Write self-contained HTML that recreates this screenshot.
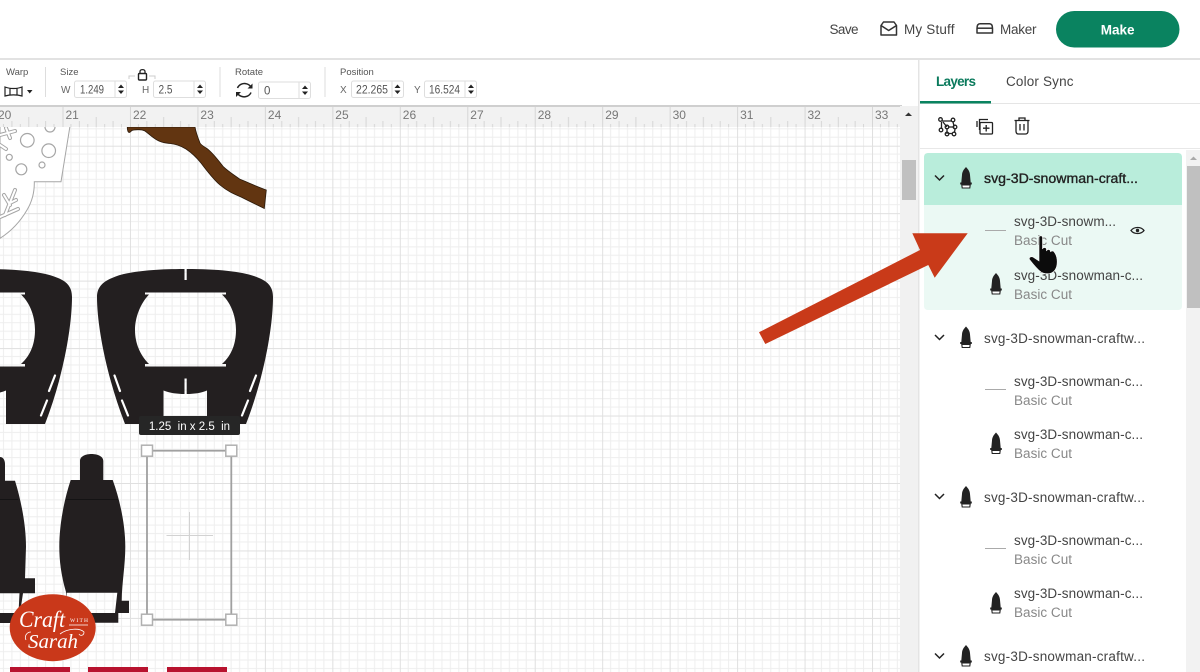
<!DOCTYPE html>
<html>
<head>
<meta charset="utf-8">
<style>
html,body{margin:0;padding:0;background:#fff;width:1200px;height:672px;overflow:hidden}
svg{display:block;font-family:"Liberation Sans",sans-serif}
</style>
</head>
<body>
<svg width="1200" height="672" viewBox="0 0 1200 672" xmlns="http://www.w3.org/2000/svg">
<defs>
<pattern id="grid" patternUnits="userSpaceOnUse" x="62.5" y="145.7" width="67.46" height="67.46">
<path d="M8.43 0V67.46M16.86 0V67.46M25.3 0V67.46M33.73 0V67.46M42.16 0V67.46M50.6 0V67.46M59 0V67.46M0 8.43H67.46M0 16.86H67.46M0 25.3H67.46M0 33.73H67.46M0 42.16H67.46M0 50.6H67.46M0 59H67.46" stroke="#eeeeee" stroke-width="1" fill="none"/>
<path d="M.5 0V67.46M0 .5H67.46" stroke="#e0e0e0" stroke-width="1" fill="none"/>
</pattern>
<pattern id="ticks" patternUnits="userSpaceOnUse" x="62.5" y="106" width="67.46" height="21">
<path d="M.5 0V21" stroke="#d6d6d6"/>
<path d="M8.43 18V21M16.86 15V21M25.3 18V21M33.73 11V21M42.16 18V21M50.6 15V21M59 18V21" stroke="#d6d6d6"/>
</pattern>
<g id="bell">
<path d="M6 0C3.2 3 2.2 5 2 8L1.300 15.5H.2V17.5H11.800V15.5H10.700L10 8C9.800 5 8.800 3 6 0Z" fill="#222"/>
<path d="M1.800 18H10.200L9.800 21H2.200Z" fill="#fff" stroke="#222" stroke-width="1.100"/>
</g>
<path id="arch" fill-rule="evenodd" fill="#231f20" d="M184.500 269C150 269 125 272 112 278C102 282 97 288 97 297C97 325 106 375 125 424H163.500V390.500C170 393 177 394 184.500 394V378.500H186.700V394C194 394 201 393 207 390.500V424H246C265 375 273 325 273 297C273 288 269 282 259 278C246 272 221 269 186.700 269V280H184.500ZM145 292.500H226V294.500H222C232 304 236 318 236 330C236 343 232 355 222 364H226V366.500H145V364H149C140 355 135 343 135 330C135 318 140 304 149 294.500H145Z"/>
</defs>

<!-- canvas -->
<rect x="0" y="106" width="902" height="566" fill="#fff"/>
<rect x="0" y="127" width="900" height="545" fill="url(#grid)"/>

<!-- snowflake piece -->
<path d="M70 126L61 181.700H34.300C34.500 190 33 200 27 210C20 222 10 232 0 238.300V126Z" fill="#fff" stroke="#a6a6a6" stroke-width="1"/>
<g fill="#fff" stroke="#a6a6a6" stroke-width="1.200">
<circle cx="27.300" cy="140.300" r="6.800"/><circle cx="48.700" cy="150.700" r="6.800"/><circle cx="9.300" cy="157.300" r="3"/><circle cx="21.300" cy="169.300" r="5.500"/><circle cx="42" cy="165" r="3"/><circle cx="50" cy="127" r="5"/>
</g>
<g fill="none" stroke="#a6a6a6" stroke-width="4" stroke-linecap="round"><path d="M0 135L15 131M6 128L10 138M0 145L6 149"/><path d="M0 217L18 209M15 190L5 215M4 195L10 205M16 200L10 203"/></g>
<g fill="none" stroke="#fff" stroke-width="2" stroke-linecap="round"><path d="M0 135L15 131M6 128L10 138M0 145L6 149"/><path d="M0 217L18 209M15 190L5 215M4 195L10 205M16 200L10 203"/></g>

<!-- branch -->
<path d="M127.300 127C127.300 130 128 132.500 129.500 132.500C131 132 131 130 134 130C138 129.500 142 129.500 145 131C149 134 153 138 157 140C162 143 166 143 170 143.500C176 144 181 146 186 149C192 153 197 158 201 163C207 171 213 179 220 185C227 191 234 194 241 197C249 201 257 205 264.300 208.500L266.300 190C258 187 249 183 240 179.300C234 175 229 172 223.300 166.700C218 160 213 153 206.700 148.300C203 146 201 145 200 143C198 138 196 133 195 127Z" fill="#623511" stroke="#2b1a0b" stroke-width=".8"/>

<!-- arch shapes -->
<use href="#arch"/>
<use href="#arch" x="-201"/>
<g stroke="#fff" stroke-width="2.200" stroke-linecap="round">
<path d="M114.500 375.500L120 391M122 400.500L128 415.500M256 375.500L250 391M248 400.500L242 415.500"/>
<path d="M55 375.500L49 391M47 400.500L41 415.500"/>
</g>
<rect x="139" y="416" width="101" height="19" rx="2" fill="#262626"/>
<text x="189.500" y="430" font-size="11.500" fill="#fff" text-anchor="middle" xml:space="preserve">1.25  in x 2.5  in</text>

<!-- bottles -->
<path fill-rule="evenodd" fill="#231f20" d="M80 480V461C80 456 86 454 91.500 454C97 454 103.300 456 103.300 461V480H112.700C120 500 125.300 525 125.300 546.700C125.300 565 122 582 121.700 600.700H129V613H118.300V622.700H71L71 613C68 606 66 600 66 592C61 575 59.300 560 59.300 546.700C59.300 525 64 500 70.700 480ZM66.700 592.700L65.500 613H115L117.300 592.700Z"/>
<path fill="#231f20" d="M0 457C3 457 5 460 5 464V480.700H15C21 500 26 525 26 546.700L25 578.300H35V593.300H23L20 613H17V623H0V613H18.500L19.500 593.300H0Z"/>
<path d="M66 499.500H118M0 499.500H18" stroke="#111" stroke-width=".8"/>

<!-- selection -->
<rect x="147" y="450.700" width="84.300" height="169" fill="none" stroke="#a0a0a0" stroke-width="1.800"/>
<g fill="#fff" stroke="#b0b0b0" stroke-width="1.500">
<rect x="141.500" y="445.200" width="11" height="11"/><rect x="225.800" y="445.200" width="11" height="11"/><rect x="141.500" y="614.200" width="11" height="11"/><rect x="225.800" y="614.200" width="11" height="11"/>
</g>
<path d="M166.500 535.500H213M189.500 512V560" stroke="#d2d2d2" stroke-width="1" fill="none"/>

<!-- red bars -->
<rect x="10" y="667" width="60" height="5" fill="#b8132f"/>
<rect x="88" y="667" width="60" height="5" fill="#b8132f"/>
<rect x="167" y="667" width="60" height="5" fill="#b8132f"/>

<!-- logo -->
<ellipse cx="52.700" cy="627.700" rx="43" ry="33.500" fill="#c9381a"/>
<g fill="#fff" font-family="'Liberation Serif',serif" font-style="italic">
<text x="19" y="627" font-size="23" textLength="46" lengthAdjust="spacingAndGlyphs">Craft</text>
<text x="70" y="622" font-size="5.500" font-style="normal" textLength="18">WITH</text>
<text x="28" y="648" font-size="20" textLength="50" lengthAdjust="spacingAndGlyphs">Sarah</text>
</g>
<path d="M69 625H88M60 634C68 628 80 628 84 632C84 636 80 636 79 634M26 640C24 636 27 632 31 632" fill="none" stroke="#fff" stroke-width=".8"/>

<!-- ruler -->
<rect x="0" y="106" width="902" height="21" fill="#f2f2f2"/>
<rect x="0" y="106" width="900" height="21" fill="url(#ticks)"/>
<rect x="0" y="105" width="902" height="2" fill="#cfcfcf"/>
<g font-size="12" fill="#777">
<text x="-2" y="119">20</text><text x="65.500" y="119">21</text><text x="133" y="119">22</text><text x="200.400" y="119">23</text><text x="267.900" y="119">24</text><text x="335.300" y="119">25</text><text x="402.800" y="119">26</text><text x="470.300" y="119">27</text><text x="537.700" y="119">28</text><text x="605.200" y="119">29</text><text x="672.600" y="119">30</text><text x="740.100" y="119">31</text><text x="807.500" y="119">32</text><text x="875" y="119">33</text>
</g>

<!-- canvas scrollbar -->
<rect x="900" y="106" width="18" height="566" fill="#f1f1f1"/>
<rect x="902" y="160" width="14" height="40" fill="#c0c0c0"/>
<path d="M905 116L908.500 112.500L912 116Z" fill="#333"/>

<!-- top bar -->
<rect x="0" y="0" width="1200" height="58" fill="#fff"/>
<rect x="0" y="58" width="1200" height="2" fill="#e2e2e2"/>
<g font-size="13.500" fill="#444">
<text x="829.500" y="34" textLength="29">Save</text>
<text x="904" y="34" textLength="50.500">My Stuff</text>
<text x="1000" y="34" textLength="36.500">Maker</text>
</g>
<g fill="none" stroke="#333" stroke-width="1.500" stroke-linejoin="round">
<path d="M881 25.500L883.500 22H894L896.500 25.500V35H881Z"/><path d="M881 25.500L888.700 30.500L896.500 25.500"/>
<path d="M977 28.500C977 25 978 23.800 980 23.800H989.500C991.500 23.800 992.500 25 992.500 28.500V33H977Z"/><path d="M977 28.200H992.500"/>
</g>
<rect x="1056" y="11" width="123.500" height="36.500" rx="18.200" fill="#0a8360"/>
<text x="1117.700" y="34.500" font-size="13.500" font-weight="bold" fill="#fff" text-anchor="middle">Make</text>

<!-- toolbar -->
<rect x="0" y="60" width="918" height="45" fill="#fff"/>
<g font-size="9.500" fill="#555">
<text x="6" y="75">Warp</text><text x="60" y="75">Size</text><text x="235" y="75">Rotate</text><text x="340" y="75">Position</text>
</g>
<g font-size="10" fill="#666">
<text x="61" y="93">W</text><text x="142" y="93">H</text><text x="340" y="93">X</text><text x="414" y="93">Y</text>
</g>
<path d="M45.500 67V97M220 67V97M325 67V97" stroke="#ddd" stroke-width="1"/>
<g fill="#fff" stroke="#dedede" stroke-width="1">
<rect x="74.500" y="81" width="52" height="16.500" rx="2"/><rect x="153.500" y="81" width="52" height="16.500" rx="2"/><rect x="258.500" y="82" width="52" height="16.500" rx="2"/><rect x="351.500" y="81" width="52" height="16.500" rx="2"/><rect x="424.500" y="81" width="52" height="16.500" rx="2"/>
<path d="M115 81V97.500M194 81V97.500M299 82V98.500M392 81V97.500M465 81V97.500"/>
</g>
<g font-size="11.500" fill="#555">
<text x="80" y="93.500" textLength="24" lengthAdjust="spacingAndGlyphs">1.249</text><text x="158.500" y="93.500" textLength="14" lengthAdjust="spacingAndGlyphs">2.5</text><text x="264" y="94.500">0</text><text x="356" y="93.500" textLength="32" lengthAdjust="spacingAndGlyphs">22.265</text><text x="429" y="93.500" textLength="31" lengthAdjust="spacingAndGlyphs">16.524</text>
</g>
<g fill="#222">
<path d="M118 88L121 84.500L124 88ZM118 90.500H124L121 94Z"/><path d="M197 88L200 84.500L203 88ZM197 90.500H203L200 94Z"/><path d="M302 89L305 85.500L308 89ZM302 91.500H308L305 95Z"/><path d="M394.500 88L397.500 84.500L400.500 88ZM394.500 90.500H400.500L397.500 94Z"/><path d="M468 88L471 84.500L474 88ZM468 90.500H474L471 94Z"/>
</g>
<path d="M129 79V76H135M149 76H155V79" fill="none" stroke="#ccc" stroke-width="1"/>
<rect x="138.500" y="73.500" width="8" height="6.500" rx="1" fill="none" stroke="#222" stroke-width="1.400"/>
<path d="M140 73.500V71.500C140 69 145 69 145 71.500V73.500" fill="none" stroke="#222" stroke-width="1.300"/>
<path d="M5 87C10 89 17 89 22 87V96C17 94.500 10 94.500 5 96ZM10 88V95M17 88V95" fill="none" stroke="#222" stroke-width="1.200"/>
<path d="M27 90H32.500L29.700 93.500Z" fill="#222"/>
<g fill="none" stroke="#222" stroke-width="1.500">
<path d="M237.500 88C239 84.500 243 82.800 246.500 83.800C248.500 84.300 250 85.500 251 87"/><path d="M251 92.500C249.500 96 245.500 97.500 242 96.500C240 96 238.500 94.800 237.500 93.500"/>
</g>
<path d="M252.500 83.500V88.500H247.500ZM236 97V92H241Z" fill="#222"/>

<!-- right panel -->
<rect x="919" y="60" width="281" height="612" fill="#fff"/>
<rect x="918" y="60" width="1.500" height="612" fill="#e4e4e4"/>
<text x="936" y="86" font-size="13.500" font-weight="bold" fill="#0a7a5c" textLength="40">Layers</text>
<text x="1006" y="86" font-size="13.500" fill="#444" textLength="67.500">Color Sync</text>
<rect x="920" y="103" width="280" height="1" fill="#e5e5e5"/>
<rect x="920" y="101" width="71" height="2.500" fill="#0a8360"/>
<rect x="920" y="148" width="280" height="1" fill="#e8e8e8"/>
<g fill="none" stroke="#222" stroke-width="1.300">
<path d="M942 121H952M941.500 122V129M943 122L947 127M953 122L954 126M948 127H954.500M947 128V134M955 129L954.500 132.500M948 133.500H953"/>
<circle cx="940.500" cy="119.500" r="1.800"/><circle cx="953" cy="120" r="1.800"/><circle cx="941" cy="130" r="1.800"/><circle cx="947" cy="127" r="1.800"/><circle cx="955" cy="127" r="1.800"/><circle cx="947" cy="134" r="1.800"/><circle cx="954" cy="134" r="1.800"/>
<path d="M979.500 130V119.500H988"/><path d="M977 127V121"/>
<rect x="980" y="122.500" width="12.500" height="11.500" rx="1"/>
<path d="M986.200 125V131.500M983 128.200H989.500"/>
<path d="M1014.500 120.500H1029.500M1019 120.500V118H1025V120.500M1016 120.500V131C1016 133 1017 134 1018.500 134H1025.500C1027 134 1028 133 1028 131V120.500M1020 124V130.500M1024 124V130.500"/>
</g>

<!-- selected group -->
<path d="M924 157C924 154.800 925.500 153 928 153H1178C1180.500 153 1182 154.800 1182 157V205H924Z" fill="#b9eddb"/>
<path d="M924 205H1182V306C1182 308.500 1180.500 310 1178 310H928C925.500 310 924 308.500 924 306Z" fill="#ebf9f4"/>

<!-- panel scrollbar -->
<rect x="1186" y="150" width="14" height="522" fill="#f2f2f2"/>
<rect x="1187" y="166" width="13" height="142" fill="#c0c0c0"/>
<path d="M1190 160L1193.500 156.500L1197 160Z" fill="#aaa"/>

<!-- chevrons -->
<g fill="none" stroke="#222" stroke-width="1.500"><path d="M935 175.500L939.500 180L944 175.500"/><path d="M935 335L939.500 339.500L944 335"/><path d="M935 494L939.500 498.500L944 494"/><path d="M935 653.500L939.500 658L944 653.500"/></g>

<!-- icons -->
<use href="#bell" x="960" y="167"/><use href="#bell" x="960" y="326.500"/><use href="#bell" x="960" y="486"/><use href="#bell" x="960" y="645"/>
<use href="#bell" x="990" y="273"/><use href="#bell" x="990" y="432.500"/><use href="#bell" x="990" y="592"/>
<path d="M985 230.500H1006M985 389.500H1006M985 548.500H1006" stroke="#aaa" stroke-width="1"/>

<!-- text -->
<text x="984" y="183" font-size="13.500" fill="#222" stroke="#222" stroke-width=".35" textLength="154" lengthAdjust="spacingAndGlyphs">svg-3D-snowman-craft...</text>
<g font-size="13.500" fill="#444" >
<text x="984" y="343" textLength="161">svg-3D-snowman-craftw...</text>
<text x="984" y="502" textLength="161">svg-3D-snowman-craftw...</text>
<text x="984" y="661" textLength="161">svg-3D-snowman-craftw...</text>
<text x="1014" y="226" textLength="102">svg-3D-snowm...</text>
<text x="1014" y="280" textLength="129">svg-3D-snowman-c...</text>
<text x="1014" y="386" textLength="129">svg-3D-snowman-c...</text>
<text x="1014" y="439" textLength="129">svg-3D-snowman-c...</text>
<text x="1014" y="545" textLength="129">svg-3D-snowman-c...</text>
<text x="1014" y="598" textLength="129">svg-3D-snowman-c...</text>
</g>
<g font-size="13.500" fill="#888">
<text x="1014" y="245" textLength="58">Basic Cut</text>
<text x="1014" y="299" textLength="58">Basic Cut</text>
<text x="1014" y="405" textLength="58">Basic Cut</text>
<text x="1014" y="458" textLength="58">Basic Cut</text>
<text x="1014" y="564" textLength="58">Basic Cut</text>
<text x="1014" y="617" textLength="58">Basic Cut</text>
</g>

<!-- arrow (above canvas, scrollbar and panel) -->
<path d="M759 332.300L920 250L912.300 233.300H967.700L934.700 277.700L928.300 265L765.300 344Z" fill="#c93a19"/>

<!-- eye -->
<path d="M1131 230.500C1134 226.500 1141 226.500 1144 230.500C1141 234.500 1134 234.500 1131 230.500Z" fill="none" stroke="#222" stroke-width="1.300"/>
<circle cx="1137.500" cy="230.500" r="1.700" fill="#222"/>

<!-- hand cursor -->
<path d="M1039 237C1039 235.500 1042.500 235.500 1042.500 237V249C1043 247 1046.500 247 1046.500 249.500V251C1047 249 1050 249 1050.500 251V252C1051 250.500 1054 250.500 1054.500 252.500C1058 257 1058 266 1055 270C1052 274.500 1045 274.500 1041 272C1037 269 1033 264 1029.500 259.500C1028.500 257.500 1031 256 1033 257L1039 261Z" fill="#0c0c0c" stroke="#fff" stroke-width=".6"/>
</svg>
</body>
</html>
